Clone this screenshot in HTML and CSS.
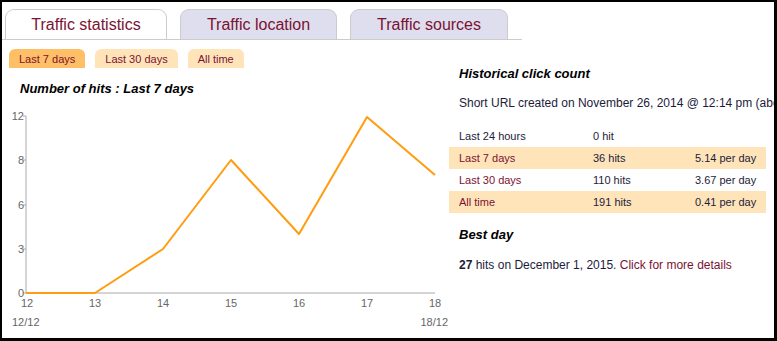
FILE: index.html
```html
<!DOCTYPE html>
<html lang="en">
<head>
  <meta charset="UTF-8" />
  <title>Traffic statistics</title>
  <link rel="stylesheet" href="styles.css">
</head>
<body>
  <div class="page">
    <nav class="tabs">
      <div class="tab active">Traffic statistics</div>
      <div class="tab tab-location">Traffic location</div>
      <div class="tab tab-sources">Traffic sources</div>
    </nav>

    <div class="content">
      <section class="left">
        <div class="ranges">
          <span class="range active">Last 7 days</span>
          <span class="range">Last 30 days</span>
          <span class="range">All time</span>
        </div>
        <h3 class="chart-title">Number of hits : Last 7 days</h3>
        <svg class="chart" width="447" height="230" viewBox="0 0 447 230">
          <g class="axis">
            <line x1="24" y1="12" x2="24" y2="189" />
            <line x1="24" y1="189" x2="433" y2="189" />
            <line x1="21" y1="12" x2="24" y2="12" />
            <line x1="21" y1="56" x2="24" y2="56" />
            <line x1="21" y1="101" x2="24" y2="101" />
            <line x1="21" y1="145" x2="24" y2="145" />
            <line x1="21" y1="189" x2="24" y2="189" />
          </g>
          <g class="ylabels">
            <text x="22" y="16">12</text>
            <text x="22" y="60">8</text>
            <text x="22" y="105">6</text>
            <text x="22" y="149">3</text>
            <text x="22" y="193">0</text>
          </g>
          <g class="xlabels">
            <text x="25" y="203">12</text>
            <text x="93" y="203">13</text>
            <text x="161" y="203">14</text>
            <text x="229" y="203">15</text>
            <text x="297" y="203">16</text>
            <text x="365" y="203">17</text>
            <text x="433" y="203">18</text>
          </g>
          <text class="date" x="10" y="222">12/12</text>
          <text class="date date-end" x="446" y="222">18/12</text>
          <polyline class="line" points="24,189 93,189 161,145 229,56 297,130 365,13 433,71" />
        </svg>
      </section>

      <section class="right">
        <h3>Historical click count</h3>
        <p class="created">Short URL created on November 26, 2014 @ 12:14 pm (about a year ago)</p>
        <div class="stats">
          <div class="row"><span class="plain">Last 24 hours</span><span>0 hit</span><span></span></div>
          <div class="row alt"><span class="link">Last 7 days</span><span>36 hits</span><span>5.14 per day</span></div>
          <div class="row"><span class="link">Last 30 days</span><span>110 hits</span><span>3.67 per day</span></div>
          <div class="row alt"><span class="link">All time</span><span>191 hits</span><span>0.41 per day</span></div>
        </div>
        <h3 class="best">Best day</h3>
        <p class="best-text"><b>27</b> hits on December 1, 2015. <span class="link">Click for more details</span></p>
      </section>
    </div>
  </div>
</body>
</html>
```

FILE: styles.css
```css
* {
  box-sizing: border-box;
  margin: 0;
  padding: 0;
}

body {
  font-family: "Liberation Sans", Arial, sans-serif;
  color: #1c1c3a;
  background: #ffffff;
}

.page {
  width: 777px;
  height: 341px;
  border-style: solid;
  border-color: #000000;
  border-width: 2px 3px 3px 2px;
  overflow: hidden;
  background: #ffffff;
}

/* tabs */
.tabs {
  display: flex;
  gap: 13px;
  width: 520px;
  padding: 7px 0 0 3px;
  border-bottom: 1px solid #cccccc;
}

.tab {
  width: 158px;
  height: 30px;
  border: 1px solid #cccccc;
  border-bottom: none;
  border-radius: 9px 9px 0 0;
  background: #dedeee;
  color: #7b1232;
  font-size: 16px;
  line-height: 30px;
  text-align: center;
}

.tab.active {
  width: 162px;
  background: #ffffff;
}

.tab-location {
  width: 157px;
}

.content {
  display: flex;
}

/* left: chart */
.left {
  width: 447px;
  flex-shrink: 0;
}

.ranges {
  display: flex;
  gap: 10px;
  margin: 9px 0 0 7px;
}

.range {
  height: 19px;
  padding: 0 10px;
  border-radius: 6px 6px 0 0;
  background: #ffe4ba;
  color: #7b1232;
  font-size: 11px;
  line-height: 20px;
}

.range.active {
  background: #ffbf66;
}

.chart-title {
  margin-top: 13px;
  padding-left: 18px;
  font-size: 13px;
  line-height: 16px;
  font-style: italic;
  color: #000000;
}

.chart {
  display: block;
  margin-top: 7px;
  font-family: "Liberation Sans", Arial, sans-serif;
  font-size: 11px;
}

.axis line {
  stroke: #aaaaaa;
  stroke-width: 1;
}

.chart text {
  fill: #666666;
}

.ylabels text {
  text-anchor: end;
}

.xlabels text {
  text-anchor: middle;
}

.date-end {
  text-anchor: end;
}

.line {
  fill: none;
  stroke: #ff9c0f;
  stroke-width: 2;
  stroke-linejoin: round;
}

/* right: click counts */
.right {
  flex: 1;
  min-width: 0;
}

.right h3 {
  margin-top: 26px;
  padding-left: 10px;
  font-size: 13px;
  line-height: 16px;
  font-style: italic;
  color: #000000;
}

.created {
  margin-top: 14px;
  padding-left: 10px;
  font-size: 12px;
  line-height: 15px;
  white-space: nowrap;
}

.stats {
  width: 317px;
  margin-top: 14px;
}

.row {
  display: grid;
  grid-template-columns: 134px 102px 1fr;
  height: 22px;
  padding-left: 10px;
  font-size: 11px;
  line-height: 22px;
}

.row.alt {
  background: #ffe4ba;
}

.link {
  color: #7b1232;
}

.right .best {
  margin-top: 14px;
}

.best-text {
  margin-top: 15px;
  padding-left: 10px;
  font-size: 12px;
  line-height: 15px;
}
```
